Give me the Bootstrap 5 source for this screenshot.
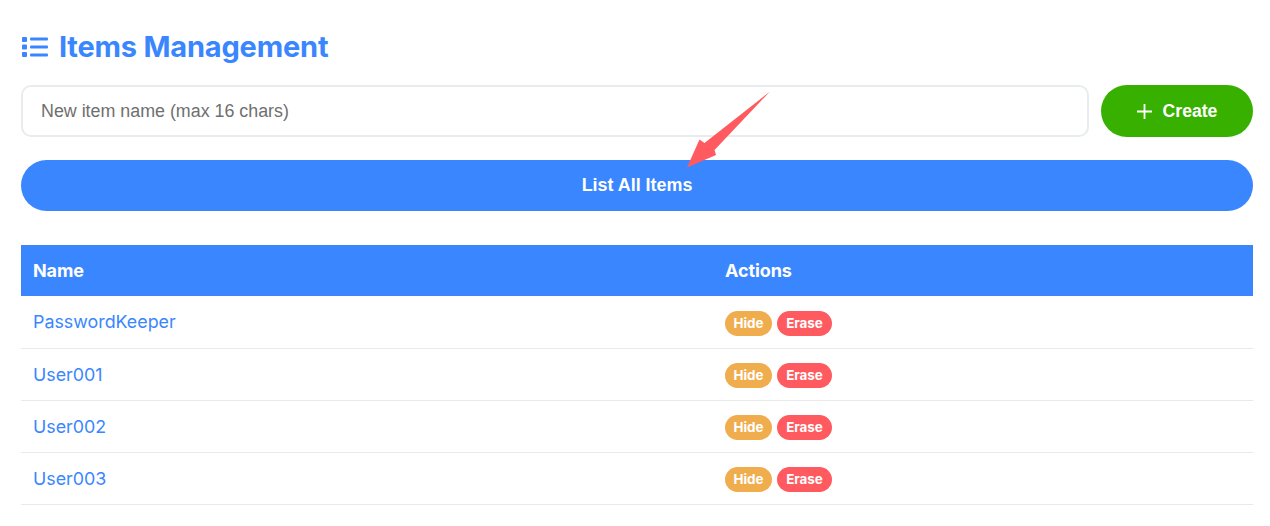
<!DOCTYPE html>
<html lang="en">
<head>
<meta charset="utf-8">
<title>Items Management</title>
<link href="https://cdn.jsdelivr.net/npm/bootstrap@5.3.0/dist/css/bootstrap.min.css" rel="stylesheet">
<style>
html,body{background:#fff;overflow:hidden}
.page-wrap{position:relative;padding:28px 17px 0 21px;font-family:Inter,"Liberation Sans",sans-serif}
.page-title{display:flex;align-items:center;gap:11px;margin:0 0 20px;height:37px;font:700 29px/37px Inter,sans-serif;letter-spacing:-.2px;color:#3a86ff}
.name-input.form-control{height:52px;border:2px solid #e9ecef;border-radius:10px;padding:0 18px;font:17.85px "Liberation Sans",sans-serif;color:#6f6f6f}
.name-input.form-control::placeholder{color:#6f6f6f;opacity:1}
.pill-btn{height:52px;border:0;border-radius:26px;color:#fff;font:700 17.9px "Liberation Sans",sans-serif}
.pill-btn:hover,.pill-btn:active{color:#fff}
.create-btn{width:152px;background:#38b000;flex:none;font-size:17.6px}
.create-btn:hover{background:#38b000}
.create-plus{margin-right:11px}
.list-btn{background:#3a86ff;margin-top:23px;height:51px}
.list-btn:hover{background:#3a86ff}
.items-table{margin:34px 0 0;width:1232px;table-layout:fixed}
.items-table th{background:#3a86ff;color:#fff;border:0;height:51px;padding:0 12px;vertical-align:middle;font:700 18px Inter,sans-serif;letter-spacing:-.1px}
.items-table td{height:52px;padding:0 12px;vertical-align:middle;border-bottom:1px solid #e9e9e9}
.col-name{width:692px}
.item-link{color:#3a86ff;text-decoration:none;font:400 17.85px Inter,sans-serif}
tr + tr .item-link{position:relative;top:1px}
.tag-btn{display:inline-block;height:25px;border-radius:13px;color:#fff;font:700 13.4px/25px Inter,sans-serif;text-align:center;vertical-align:middle;position:relative;top:1px}
.tag-hide{width:47px;background:#f0ad4e}
.tag-erase{width:55px;background:#ff5a5f;margin-left:5px}
.arrow-mark{position:absolute;left:680px;top:85px;width:96px;height:90px;pointer-events:none}
</style>
</head>
<body>
<div class="page-wrap">
  <h1 class="page-title">
    <svg width="27" height="22" viewBox="0 0 27 22" fill="#3a86ff" aria-hidden="true">
      <rect x="1" y="1" width="5" height="5" rx="1"/><rect x="1" y="8.5" width="5" height="5" rx="1"/><rect x="1" y="16" width="5" height="5" rx="1"/>
      <rect x="9" y="1.5" width="18" height="3" rx="1"/><rect x="9" y="9.5" width="18" height="3" rx="1"/><rect x="9" y="17.5" width="18" height="3" rx="1"/>
    </svg>
    <span>Items Management</span>
  </h1>
  <div class="d-flex gap-2">
    <input class="form-control name-input me-1" type="text" placeholder="New item name (max 16 chars)">
    <button class="btn pill-btn create-btn d-flex align-items-center justify-content-center" type="button">
      <svg class="create-plus" width="15" height="15" viewBox="0 0 15 15" stroke="#fff" stroke-width="1.8" aria-hidden="true"><path d="M7.5 0v15M0 7.5h15"/></svg>Create
    </button>
  </div>
  <button class="btn pill-btn list-btn w-100" type="button">List All Items</button>
  <table class="table items-table">
    <thead>
      <tr><th class="col-name">Name</th><th>Actions</th></tr>
    </thead>
    <tbody>
      <tr><td><a class="item-link" href="#">PasswordKeeper</a></td><td><span class="tag-btn tag-hide">Hide</span><span class="tag-btn tag-erase">Erase</span></td></tr>
      <tr><td><a class="item-link" href="#">User001</a></td><td><span class="tag-btn tag-hide">Hide</span><span class="tag-btn tag-erase">Erase</span></td></tr>
      <tr><td><a class="item-link" href="#">User002</a></td><td><span class="tag-btn tag-hide">Hide</span><span class="tag-btn tag-erase">Erase</span></td></tr>
      <tr><td><a class="item-link" href="#">User003</a></td><td><span class="tag-btn tag-hide">Hide</span><span class="tag-btn tag-erase">Erase</span></td></tr>
    </tbody>
  </table>
  <svg class="arrow-mark" viewBox="680 85 96 90" aria-hidden="true"><path fill="#ff5a5f" d="M770 91.5 L769 92.5 L714.5 150 L716 155 L687 167.5 L699.5 139.5 L704.5 143 Z"/></svg>
</div>
<script src="https://cdn.jsdelivr.net/npm/bootstrap@5.3.0/dist/js/bootstrap.bundle.min.js"></script>
</body>
</html>
